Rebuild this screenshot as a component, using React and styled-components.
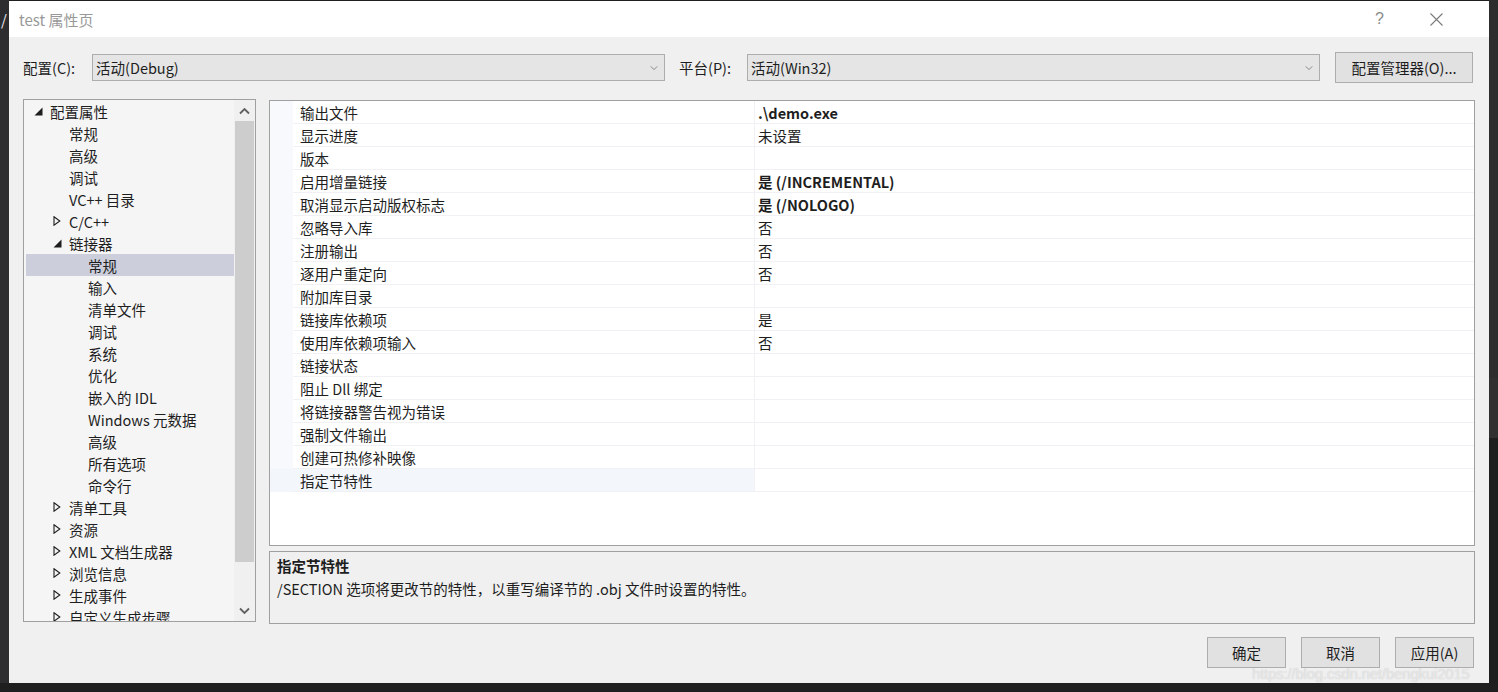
import styled, { createGlobalStyle } from "styled-components";

const GlobalStyle = createGlobalStyle`
  *, *::before, *::after {
    box-sizing: border-box;
  }
  html, body {
    margin: 0;
    padding: 0;
    background: #2b2b2d;
  }
  body {
    font-family: "Noto Sans CJK SC", "Noto Sans", sans-serif;
    font-size: 15px;
    color: #1e1e1e;
  }
`;

const Page = styled.div`
  position: relative;
  width: 1498px;
  height: 692px;
  overflow: hidden;
  background: #1f1f1f;
  display: flex;
  flex-direction: row;
  align-items: flex-start;
`;

const LeftStrip = styled.div`
  width: 9px;
  height: 683px;
  background: #2d2d30;
  color: #e8e8e8;
  font-size: 15px;
  line-height: 40px;
  padding-left: 1px;
  overflow: hidden;
`;

const RightStrip = styled.div`
  flex: 1;
  height: 683px;
  background: linear-gradient(#2d2d2d 0 378px, #303030 378px 438px, #1e1e1e 438px);
`;

const Dialog = styled.div`
  width: 1480px;
  height: 682px;
  margin-top: 1px;
  background: #f0f0f0;
  display: flex;
  flex-direction: column;
  flex: none;
`;

const TitleBar = styled.div`
  height: 36px;
  background: #ffffff;
  display: flex;
  align-items: center;
  padding: 0 24px 0 10px;
  color: #999999;
  font-size: 15px;
`;

const Title = styled.div`
  flex: 1;
  padding-top: 1px;
`;

const TitleBtn = styled.div`
  width: 57px;
  display: flex;
  justify-content: center;
  color: #8a8a8a;
  font-family: "Liberation Sans", sans-serif;
  font-size: 16px;
`;

const Body = styled.div`
  flex: 1;
  display: flex;
  flex-direction: column;
  padding: 15px 14px 15px 14px;
`;

const ConfigRow = styled.div`
  height: 31px;
  display: flex;
  align-items: center;
`;

const Label = styled.div`
  width: ${(p) => p.$w}px;
  flex: none;
  font-size: 14.5px;
`;

const Combo = styled.div`
  width: 573px;
  height: 27px;
  flex: none;
  border: 1px solid #adadad;
  background: #e5e5e5;
  display: flex;
  align-items: center;
  padding: 0 6px 0 3px;
  font-size: 14.5px;
  margin-right: ${(p) => p.$mr}px;
`;

const ComboText = styled.div`
  flex: 1;
`;

const Button = styled.div`
  width: ${(p) => p.$w}px;
  height: 31px;
  flex: none;
  border: 1px solid #adadad;
  background: #e1e1e1;
  display: flex;
  align-items: center;
  justify-content: center;
  font-size: 14.5px;
`;

const Main = styled.div`
  margin-top: 16px;
  height: 525px;
  display: flex;
  flex-direction: row;
  align-items: flex-start;
  gap: 13px;
`;

const Tree = styled.div`
  width: 233px;
  height: 523px;
  border: 1px solid #a0a0a0;
  background: #f5f5f5;
  display: flex;
  flex-direction: row;
  overflow: hidden;
`;

const TreeList = styled.div`
  flex: 1;
  padding: 0 0 0 2px;
  overflow: hidden;
`;

const TreeRow = styled.div`
  height: 22px;
  display: flex;
  align-items: center;
  padding-left: ${(p) => p.$indent}px;
  background: ${(p) => (p.$selected ? "#cccedb" : "transparent")};
  white-space: nowrap;
  font-size: 14.5px;
`;

const Twist = styled.div`
  width: 16px;
  height: 22px;
  flex: none;
  display: flex;
  align-items: center;
  justify-content: flex-start;
`;

const ScrollBar = styled.div`
  width: 21px;
  display: flex;
  flex-direction: column;
  background: #f0f0f0;
`;

const ScrollArrow = styled.div`
  height: 21px;
  display: flex;
  align-items: center;
  justify-content: center;
`;

const ScrollTrack = styled.div`
  flex: 1;
  padding: 0 1px;
  display: flex;
  flex-direction: column;
`;

const Thumb = styled.div`
  height: 441px;
  background: #cdcdcd;
`;

const RightCol = styled.div`
  margin-top: 1px;
  width: 1206px;
  display: flex;
  flex-direction: column;
  gap: 5px;
`;

const Grid = styled.div`
  height: 446px;
  border: 1px solid #a0a0a0;
  background: #ffffff;
  overflow: hidden;
`;

const GridRow = styled.div`
  height: 23px;
  display: grid;
  grid-template-columns: 23px 462px 1fr;
`;

const Margin = styled.div`
  background: ${(p) => (p.$selected ? "#f3f6fb" : "#f7f9fc")};
`;

const NameCell = styled.div`
  border-bottom: 1px solid #f0f0f5;
  border-right: 1px solid #f0f0f5;
  padding-left: 7px;
  display: flex;
  align-items: center;
  font-size: 14.5px;
  white-space: nowrap;
  background: ${(p) => (p.$selected ? "#f3f6fb" : "transparent")};
`;

const ValueCell = styled.div`
  border-bottom: 1px solid #f0f0f5;
  padding-left: 3px;
  display: flex;
  align-items: center;
  font-size: 14.5px;
  font-weight: ${(p) => (p.$bold ? 700 : 400)};
  white-space: nowrap;
`;

const Desc = styled.div`
  height: 73px;
  border: 1px solid #a0a0a0;
  background: #f0f0f0;
  padding: 3px 7px;
`;

const DescTitle = styled.div`
  font-weight: 700;
  font-size: 14.5px;
  line-height: 22px;
`;

const DescText = styled.div`
  font-size: 14.5px;
  line-height: 24px;
`;

const ButtonRow = styled.div`
  margin-top: 13px;
  display: flex;
  justify-content: flex-end;
  gap: 15px;
  padding-right: 1px;
`;

const Watermark = styled.div`
  position: absolute;
  left: 1252px;
  top: 665px;
  font-family: "Liberation Sans", sans-serif;
  font-size: 15px;
  letter-spacing: -0.2px;
  color: rgba(255, 255, 255, 0.55);
  text-shadow: 0 0 1px rgba(120, 120, 120, 0.4);
  white-space: nowrap;
  pointer-events: none;
`;

const Chevron = ({ color = "#7a7a7a", size = 8 }) => (
  <svg width={size} height={size} viewBox="0 0 10 10">
    <polyline points="1,3 5,7 9,3" fill="none" stroke={color} strokeWidth="1.1" />
  </svg>
);

const ScrollChevron = ({ dir }) => (
  <svg width="11" height="8" viewBox="0 0 11 8">
    {dir === "down" ? (
      <polyline points="1,1.5 5.5,6 10,1.5" fill="none" stroke="#606060" strokeWidth="1.8" />
    ) : (
      <polyline points="1,6.5 5.5,2 10,6.5" fill="none" stroke="#606060" strokeWidth="1.8" />
    )}
  </svg>
);

const Expanded = () => (
  <svg width="9" height="9" viewBox="0 0 9 9">
    <polygon points="8.5,0.5 8.5,8.5 0.5,8.5" fill="#1e1e1e" />
  </svg>
);

const Collapsed = () => (
  <svg width="8" height="10" viewBox="0 0 8 10">
    <polygon points="1,0.8 6.8,5 1,9.2" fill="none" stroke="#1e1e1e" strokeWidth="1.1" />
  </svg>
);

const treeItems = [
  { text: "配置属性", level: 0, twist: "open" },
  { text: "常规", level: 1 },
  { text: "高级", level: 1 },
  { text: "调试", level: 1 },
  { text: "VC++ 目录", level: 1 },
  { text: "C/C++", level: 1, twist: "closed" },
  { text: "链接器", level: 1, twist: "open" },
  { text: "常规", level: 2, selected: true },
  { text: "输入", level: 2 },
  { text: "清单文件", level: 2 },
  { text: "调试", level: 2 },
  { text: "系统", level: 2 },
  { text: "优化", level: 2 },
  { text: "嵌入的 IDL", level: 2 },
  { text: "Windows 元数据", level: 2 },
  { text: "高级", level: 2 },
  { text: "所有选项", level: 2 },
  { text: "命令行", level: 2 },
  { text: "清单工具", level: 1, twist: "closed" },
  { text: "资源", level: 1, twist: "closed" },
  { text: "XML 文档生成器", level: 1, twist: "closed" },
  { text: "浏览信息", level: 1, twist: "closed" },
  { text: "生成事件", level: 1, twist: "closed" },
  { text: "自定义生成步骤", level: 1, twist: "closed" },
];

const props = [
  ["输出文件", ".\\demo.exe", true],
  ["显示进度", "未设置"],
  ["版本", ""],
  ["启用增量链接", "是 (/INCREMENTAL)", true],
  ["取消显示启动版权标志", "是 (/NOLOGO)", true],
  ["忽略导入库", "否"],
  ["注册输出", "否"],
  ["逐用户重定向", "否"],
  ["附加库目录", ""],
  ["链接库依赖项", "是"],
  ["使用库依赖项输入", "否"],
  ["链接状态", ""],
  ["阻止 Dll 绑定", ""],
  ["将链接器警告视为错误", ""],
  ["强制文件输出", ""],
  ["创建可热修补映像", ""],
  ["指定节特性", "", false, true],
];

const App = () => {
  return (
    <>
      <GlobalStyle />
      <Page>
        <LeftStrip>/</LeftStrip>
        <Dialog>
          <TitleBar>
            <Title>test 属性页</Title>
            <TitleBtn>?</TitleBtn>
            <TitleBtn>
              <svg width="13" height="13" viewBox="0 0 13 13">
                <path d="M0.5 0.5 L12.5 12.5 M12.5 0.5 L0.5 12.5" stroke="#7a7a7a" strokeWidth="1.1" />
              </svg>
            </TitleBtn>
          </TitleBar>
          <Body>
            <ConfigRow>
              <Label $w={69}>配置(C):</Label>
              <Combo $mr={14}>
                <ComboText>活动(Debug)</ComboText>
                <Chevron />
              </Combo>
              <Label $w={68}>平台(P):</Label>
              <Combo $mr={15}>
                <ComboText>活动(Win32)</ComboText>
                <Chevron />
              </Combo>
              <Button $w={138}>配置管理器(O)...</Button>
            </ConfigRow>

            <Main>
              <Tree>
                <TreeList>
                  {treeItems.map((item, i) => (
                    <TreeRow key={i} $indent={8 + item.level * 19} $selected={item.selected}>
                      <Twist>
                        {item.twist === "open" && <Expanded />}
                        {item.twist === "closed" && <Collapsed />}
                      </Twist>
                      <span>{item.text}</span>
                    </TreeRow>
                  ))}
                </TreeList>
                <ScrollBar>
                  <ScrollArrow>
                    <ScrollChevron dir="up" />
                  </ScrollArrow>
                  <ScrollTrack>
                    <Thumb />
                  </ScrollTrack>
                  <ScrollArrow>
                    <ScrollChevron dir="down" />
                  </ScrollArrow>
                </ScrollBar>
              </Tree>

              <RightCol>
                <Grid>
                  {props.map(([name, value, bold, selected], i) => (
                    <GridRow key={i}>
                      <Margin $selected={selected} />
                      <NameCell $selected={selected}>
                        <span>{name}</span>
                      </NameCell>
                      <ValueCell $bold={bold}>
                        <span>{value}</span>
                      </ValueCell>
                    </GridRow>
                  ))}
                </Grid>
                <Desc>
                  <DescTitle>指定节特性</DescTitle>
                  <DescText>/SECTION 选项将更改节的特性，以重写编译节的 .obj 文件时设置的特性。</DescText>
                </Desc>
              </RightCol>
            </Main>

            <ButtonRow>
              <Button $w={79}>确定</Button>
              <Button $w={79}>取消</Button>
              <Button $w={79}>应用(A)</Button>
            </ButtonRow>
          </Body>
        </Dialog>
        <RightStrip />
        <Watermark>https://blog.csdn.net/bengkui2015</Watermark>
      </Page>
    </>
  );
};

export default App;
